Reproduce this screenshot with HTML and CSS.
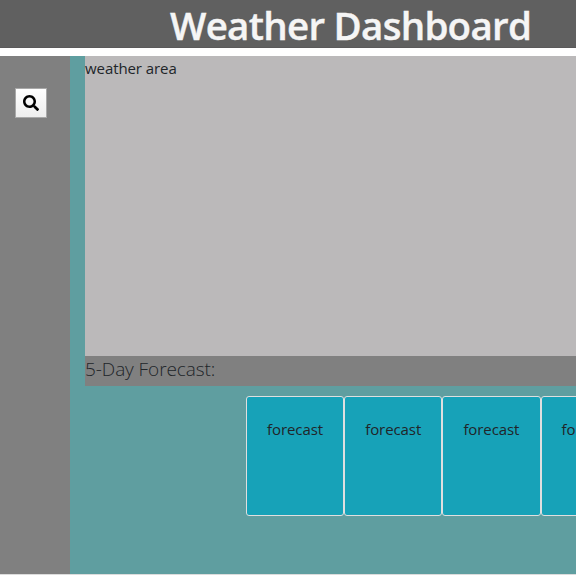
FILE: index.html
```html
<!DOCTYPE html>
<html lang="en">
<head>
<meta charset="utf-8">
<title>Weather Dashboard</title>
<link rel="stylesheet" href="styles.css">
</head>
<body>
<header class="banner"><h1>Weather Dashboard</h1></header>
<main class="layout">
  <aside class="sidebar">
    <button class="search" aria-label="Search">
      <svg viewBox="0 0 512 512" width="16" height="16"><path d="M505 442.7L405.300 343c-4.500-4.500-10.600-7-17-7H372c27.600-35.300 44-79.700 44-128C416 93.100 322.900 0 208 0S0 93.100 0 208s93.100 208 208 208c48.300 0 92.700-16.400 128-44v16.300c0 6.400 2.500 12.500 7 17l99.700 99.700c9.400 9.400 24.600 9.400 33.900 0l28.300-28.300c9.400-9.400 9.400-24.600.1-34zM208 336c-70.700 0-128-57.200-128-128 0-70.700 57.200-128 128-128 70.700 0 128 57.200 128 128 0 70.700-57.200 128-128 128z"/></svg>
    </button>
  </aside>
  <section class="content">
    <div class="weather">weather area</div>
    <h2 class="heading">5-Day Forecast:</h2>
    <div class="cards">
      <div class="card">forecast</div>
      <div class="card">forecast</div>
      <div class="card">forecast</div>
      <div class="card">forecast</div>
    </div>
  </section>
</main>
</body>
</html>
```
FILE: styles.css
```css
* { box-sizing: border-box; }
body {
  margin: 0;
  height: 575px;
  overflow: hidden;
  background: #fff;
  color: #212529;
  font: 400 15px/24px "Open Sans", "Noto Sans", sans-serif;
  letter-spacing: -0.08px;
}
.banner {
  height: 48px;
  margin-bottom: 8px;
  padding-left: 170px;
  background: #606060;
  border-bottom: 1px solid #5a595a;
}
h1 {
  margin: 0;
  color: #f5f5f5;
  font-size: 38.5px;
  font-weight: 600;
  letter-spacing: -0.73px;
  line-height: 50px;
  white-space: nowrap;
  -webkit-text-stroke: 0.4px #f5f5f5;
}
.layout {
  display: flex;
  height: 519px;
  background: #5f9ea0;
  border-bottom: 1px solid #dcdcdc;
}
.sidebar {
  flex: none;
  width: 70px;
  padding: 32px 15px;
  background: #808080;
}
.search {
  display: flex;
  align-items: center;
  justify-content: center;
  width: 32px;
  height: 30px;
  padding: 0;
  border: 1px solid #a9a9a9;
  background: linear-gradient(#fff, #eee);
}
.content {
  flex: 1;
  min-width: 0;
  padding-left: 15px;
  overflow: hidden;
}
.weather {
  height: 300px;
  background: #bbb9ba;
}
.heading {
  height: 30px;
  margin: 0;
  background: #808080;
  font-size: 19px;
  font-weight: 300;
  line-height: 26px;
}
.cards {
  display: flex;
  padding: 10px 0 0 161px;
}
.card {
  flex: none;
  width: 98.2px;
  height: 120px;
  padding: 20px;
  border: 1px solid #dfdfdf;
  border-radius: 3px;
  background: #17a2b8;
  line-height: 24px;
}
```
